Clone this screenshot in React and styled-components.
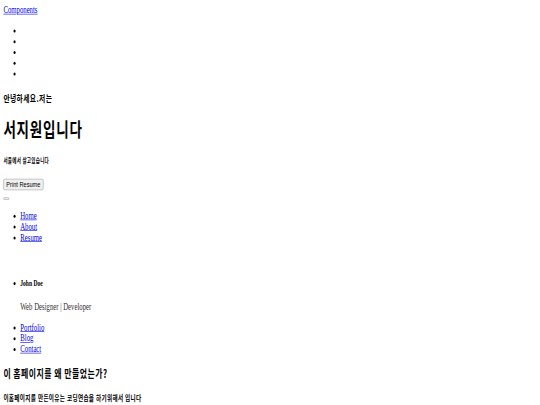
import React from "react";
import styled, { createGlobalStyle } from "styled-components";

const Global = createGlobalStyle`
  html, body { margin: 0; padding: 0; background: #fff; overflow: hidden; }
`;

const Viewport = styled.div`
  width: 1280px;
  transform: scale(0.421875, 0.6);
  transform-origin: 0 0;
`;

const Page = styled.div`
  padding: 8px;
  font-family: "Liberation Serif", "Noto Sans CJK KR", serif;
  font-size: 16px;
  color: #000;
  display: flow-root;
`;

const Link = styled.a`
  color: #0000ee;
  text-decoration: underline;
`;

const List = styled.ul`
  margin: 16px 0;
  padding-left: 40px;
  list-style: disc;
`;

const Item = styled.li``;

const KoreanHeading = styled.div`
  font-family: "Noto Sans CJK KR", "Liberation Sans", sans-serif;
  font-weight: bold;
  line-height: 1.25;
  letter-spacing: 0.06em;
  font-size: ${(p) => p.$size}px;
  margin: ${(p) => p.$margin}px 0;
`;

const ButtonRow = styled.div``;

const Button = styled.button`
  font-family: "Liberation Sans", Arial, sans-serif;
  font-size: 13.333px;
  padding: 1px 6px;
  border: 1px solid #9a9a9a;
  border-radius: 3px;
  background: #efefef;
  color: #000;
`;

const Spacer = styled.div`
  height: 20px;
`;

const ProfileName = styled.h5`
  font-size: 13.28px;
  font-weight: bold;
  margin: 22.18px 0;
`;

const Role = styled.p`
  margin: 16px 0;
  color: #333;
`;

export default function App() {
  return (
    <>
      <Global />
      <Viewport>
        <Page>
          <Link href="#">Components</Link>
          <List>
            <Item></Item>
            <Item></Item>
            <Item></Item>
            <Item></Item>
            <Item></Item>
          </List>
          <KoreanHeading as="h4" $size={16} $margin={21.28}>안녕하세요.저는</KoreanHeading>
          <KoreanHeading as="h1" $size={32} $margin={21.44}>서지원입니다</KoreanHeading>
          <KoreanHeading as="h6" $size={10.72} $margin={24.97}>서울에서 살고있습니다</KoreanHeading>
          <ButtonRow>
            <Button>Print Resume</Button>
          </ButtonRow>
          <ButtonRow>
            <Button></Button>
          </ButtonRow>
          <List>
            <Item><Link href="#">Home</Link></Item>
            <Item><Link href="#">About</Link></Item>
            <Item><Link href="#">Resume</Link></Item>
          </List>
          <Spacer />
          <List>
            <Item>
              <ProfileName>John Doe</ProfileName>
              <Role>Web Designer | Developer</Role>
            </Item>
          </List>
          <List>
            <Item><Link href="#">Portfolio</Link></Item>
            <Item><Link href="#">Blog</Link></Item>
            <Item><Link href="#">Contact</Link></Item>
          </List>
          <KoreanHeading as="h3" $size={18.72} $margin={18.72}>이 홈페이지를 왜 만들었는가?</KoreanHeading>
          <KoreanHeading as="h5" $size={13.28} $margin={22.18}>이홈페이지를 만든이유는 코딩연습을 하기위해서 입니다</KoreanHeading>
        </Page>
      </Viewport>
    </>
  );
}
